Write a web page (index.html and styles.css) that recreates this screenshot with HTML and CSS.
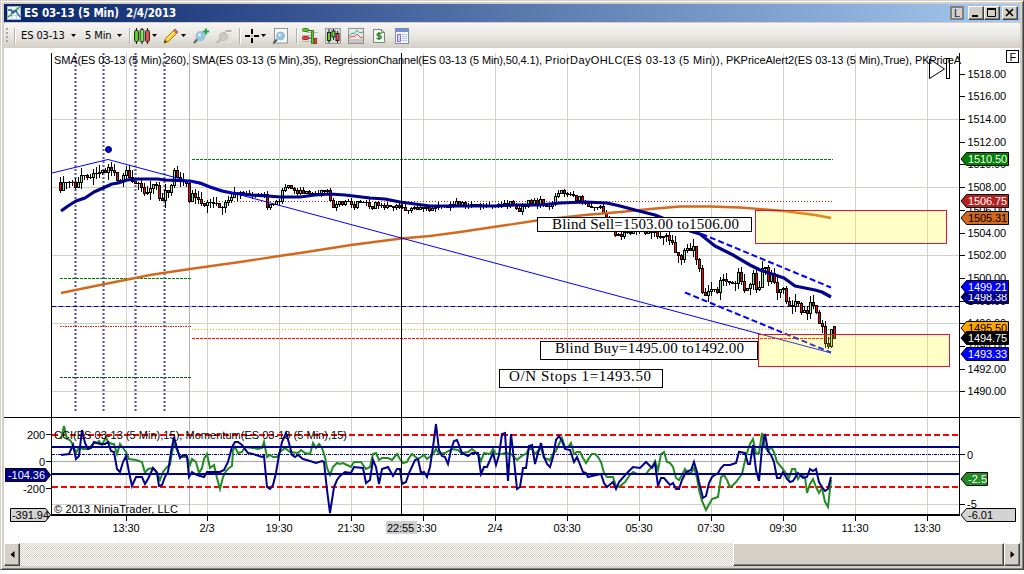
FILE: index.html
```html
<!DOCTYPE html>
<html lang="en">
<head>
    <meta charset="UTF-8">
    <meta name="viewport" content="width=device-width, initial-scale=1.0">
    <title>ES 03-13 (5 Min)  2/4/2013</title>
    <link rel="stylesheet" href="styles.css">
</head>
<body>
<div class="window">
    <!-- Title bar -->
    <div class="titlebar">
        <svg class="app-icon" width="14" height="14" viewBox="0 0 14 14">
            <rect x=".5" y=".5" width="13" height="13" fill="#f4f8fb" stroke="#9fb4cc"/>
            <path d="M.5 4.500h13M.5 9.500h13M4.500 .5v13M9.500 .5v13" stroke="#c3cfdd" fill="none"/>
            <path d="M1 11l3-2 2-4 3-1 4-3" stroke="#2da02d" stroke-width="1.500" fill="none"/>
            <path d="M1 4l3 0 2 3 3-2 2 3 2 3" stroke="#1d4fa0" stroke-width="1.300" fill="none"/>
        </svg>
        <span class="title">ES 03-13 (5 Min)&nbsp; 2/4/2013</span>
        <span class="win-link">L</span>
        <span class="win-btn"><svg width="14" height="12"><path d="M3 9h6" stroke="#000" stroke-width="2"/></svg></span>
        <span class="win-btn"><svg width="14" height="12"><path d="M2.500 1v8.500h8V1" stroke="#000" fill="none"/><path d="M2 2h9" stroke="#000" stroke-width="2"/></svg></span>
        <span class="win-btn win-close"><svg width="14" height="12"><path d="M3 2l7 7M10 2l-7 7" stroke="#000" stroke-width="1.600"/></svg></span>
    </div>

    <!-- Toolbar -->
    <div class="toolbar">
        <span class="grip"></span>
        <span class="sep"></span>
        <span class="combo instrument">ES 03-13</span><i class="arrow"></i>
        <span class="combo interval">5 Min</span><i class="arrow"></i>
        <span class="sep sep-tools"></span>
        <svg class="ico-style" width="16" height="16" viewBox="0 0 16 16">
            <path d="M2.500 0v16M8 0v16M13.500 0v16" stroke="#222" stroke-width="1.200"/>
            <rect x=".6" y="2.500" width="3.800" height="11" rx="1" fill="#5fd62c" stroke="#222"/>
            <rect x="6.100" y="1.500" width="3.800" height="12" rx="1" fill="#7be84e" stroke="#222"/>
            <rect x="11.600" y="2.500" width="3.800" height="11" rx="1" fill="#f2504b" stroke="#222"/>
        </svg><i class="arrow"></i>
        <svg class="ico-draw" width="16" height="16" viewBox="0 0 16 16">
            <path d="M1 15l1.500-4.500L11.500 1.500 14.500 4.500 5.500 13.500z" fill="#f7cf35" stroke="#a67c12"/>
            <path d="M3.500 11.500L12.500 2.500" stroke="#fff3a0"/>
            <path d="M10.500 2.500L12 1l3 3-1.500 1.500z" fill="#e46a62" stroke="#9b4b40" stroke-width=".7"/>
            <path d="M1 15l1-3 2 2z" fill="#333"/>
        </svg><i class="arrow"></i>
        <svg class="ico-in" width="17" height="16" viewBox="0 0 17 16">
            <path d="M1 15l4-4.500" stroke="#666" stroke-width="2.200"/>
            <circle cx="7.500" cy="8" r="4.500" fill="#8cc6ee" stroke="#a8b8c4"/>
            <circle cx="6.500" cy="7" r="1.800" fill="#d8effc"/>
            <path d="M13 .5v6M10 3.500h6" stroke="#18a838" stroke-width="2"/>
        </svg>
        <svg class="ico-out" width="17" height="16" viewBox="0 0 17 16">
            <path d="M1 15l4-4.500" stroke="#bbb" stroke-width="2.200"/>
            <circle cx="7.500" cy="8.500" r="4.200" fill="#c9c9c7" stroke="#c0c0bd"/>
            <path d="M9.500 3h6" stroke="#b3b3b0" stroke-width="2"/>
        </svg>
        <span class="sep sep-cross"></span>
        <svg class="ico-cross" width="14" height="14" viewBox="0 0 14 14">
            <path d="M0 7h5M9 7h5M7 0v5M7 9v5" stroke="#000" stroke-width="2"/>
            <path d="M6.500 7h1" stroke="#000"/>
        </svg><i class="arrow"></i>
        <svg class="ico-page" width="15" height="16" viewBox="0 0 15 16">
            <rect x="1.500" y=".5" width="13" height="14.500" fill="#f8f8f8" stroke="#8e9299"/>
            <path d="M0 15.500l4-4" stroke="#555" stroke-width="2"/>
            <circle cx="7.500" cy="8" r="4" fill="#8cc4ec" stroke="#a5b6c6"/>
            <circle cx="6.500" cy="7" r="1.500" fill="#dcf0fc"/>
        </svg>
        <span class="sep sep-page"></span>
        <svg class="ico-dom" width="16" height="16" viewBox="0 0 16 16">
            <path d="M5 4.500h11M0 7.500h9M7 10.500h9M0 13.500h9" stroke="#b5b5b5"/>
            <rect x=".5" y=".5" width="6" height="3" rx="1" fill="#5cc828" stroke="#3c8e1e"/>
            <rect x=".5" y="8.500" width="6" height="3" rx="1" fill="#e83c34" stroke="#b02c26"/>
            <path d="M6 2.500h4M6 10h3" stroke="#444"/>
            <rect x="9.500" y="2.500" width="2" height="13" fill="#66cc33" stroke="#388020"/>
            <rect x="12.500" y="10.500" width="2" height="5" fill="#e8504a" stroke="#a02c26"/>
        </svg>
        <svg class="ico-bars" width="16" height="16" viewBox="0 0 16 16">
            <rect x=".5" y=".5" width="15" height="15" fill="#d9d9d9" stroke="#9a9a9a"/>
            <path d="M4 1v14M8.500 1v11M12.500 3v12" stroke="#222"/>
            <rect x="2.500" y="4.500" width="3" height="8" fill="#5cd42a" stroke="#222"/>
            <rect x="7" y="3" width="3" height="6" fill="#6ede40" stroke="#222"/>
            <rect x="11" y="5.500" width="3" height="7" fill="#ea4a44" stroke="#222"/>
        </svg>
        <svg class="ico-ind" width="16" height="16" viewBox="0 0 16 16">
            <rect x=".5" y=".5" width="15" height="15" fill="#e9e9e9" stroke="#8e8e8e"/>
            <rect x="1" y="11" width="14" height="4" fill="#c4c4c4"/>
            <path d="M1 8l3-3 2 1 3-4 3 3 3-1" stroke="#36a886" fill="none"/>
            <path d="M1 10l3-2 2 1 3-3 3 3 3 1" stroke="#dd4a44" fill="none"/>
        </svg>
        <svg class="ico-pnl" width="12" height="14" viewBox="0 0 12 14">
            <path d="M.5 .5h8l3 3v10h-11z" fill="#f6f8f4" stroke="#7d8479"/>
            <path d="M8.500 .5v3h3" fill="none" stroke="#7d8479"/>
            <path d="M8.500 4.500h-3.500l-1 1 1 1.300h2.500l1 1.200-1 1.500H3.500M6 3v8" stroke="#23852a" stroke-width="1.300" fill="none"/>
        </svg>
        <svg class="ico-prop" width="14" height="16" viewBox="0 0 14 16">
            <rect x=".5" y=".5" width="13" height="15" fill="#f4f8ff" stroke="#7d8ca6"/>
            <rect x="1" y="1" width="12" height="3" fill="#6d90d6"/>
            <rect x="2.500" y="6.500" width="3" height="7" fill="#d9cbfa" stroke="#8d6ae0"/>
            <path d="M7 6.500h5M7 8.500h5M7 10.500h5M7 12.500h5" stroke="#b9c6da"/>
        </svg>
    </div>

    <!-- Price and indicator panels -->
    <svg id="chart" class="chart" width="1016" height="495" viewBox="4 48 1016 495">
        <g id="grid" class="grid"></g>
        <path class="session" d="M189.500 53V514"/>
        <path class="gray-line" d="M52 461.500H959"/>
        <g id="session-marks" class="session-marks"></g>

        <!-- horizontal levels -->
        <path class="level" stroke="#008000" stroke-dasharray="3 1" d="M192 159.500H833M60 278.500H191"/>
        <path class="level" stroke="#0a5a0a" stroke-dasharray="3 1" d="M60 377.500H191"/>
        <path class="level" stroke="#b22222" stroke-dasharray="1 2" d="M192 201.500H833"/>
        <path class="level" stroke="#c03010" stroke-dasharray="2 1 1 1" d="M60 326.500H191"/>
        <path class="level" stroke="#ffa500" stroke-dasharray="1 2" d="M192 329.500H833"/>
        <path class="level" stroke="#ff0000" stroke-dasharray="3 1" d="M192 338.500H833"/>
        <path class="level" stroke="#8c8cc8" d="M52 306.500H959"/>
        <path class="level" stroke="#00008b" stroke-dasharray="4 3" d="M52 306.500H959"/>

        <g id="candles" class="candles"></g>

        <polyline class="sma-slow" points="61,293 100,285 125,280 150,275 190,269 240,262 279,256 300,253 351,245 401,238.500 430,236 460,232 500,226 540,220 585,215 620,212 650,209 680,206.500 710,206.500 740,207.500 784,211 815,215 831,218"/>
        <polyline class="sma-fast" points="61,211 68,206 76,201 85,198 94,192 103,188 112,184 118,183 127,180 138,179 158,179 165,180 190,181 200,183 210,187 222,191 232,193 250,195 268,196 280,197 300,197 315,195 330,194 345,195 370,198 385,199 400,202 415,204 430,206 470,206 495,206 515,205 540,205 560,203 585,202 607,203 620,206 635,210 655,215 665,219 680,225 690,231 700,234 715,246 733,255 750,265 760,270 784,278 795,286 805,288 815,290 822,292 831,297"/>
        <path class="zigzag" d="M52 173L108 159.500L831 353"/>
        <path class="channel" d="M685 227L831 287.500M685 292.500L831 352.500"/>
        <circle cx="108.500" cy="149.500" r="3" fill="#00f" stroke="#000"/>

        <!-- drawn zones -->
        <g class="zone">
            <rect x="755.500" y="210.500" width="191" height="33"/>
            <rect x="758.500" y="334.500" width="191" height="32"/>
        </g>
        <g class="note">
            <rect x="537.500" y="217.500" width="214" height="14"/>
            <rect x="540.500" y="341.500" width="217" height="18"/>
            <rect x="499.500" y="369.500" width="163" height="18"/>
            <text x="552" y="229" textLength="187">Blind Sell=1503.00 to1506.00</text>
            <text x="555" y="353" textLength="189">Blind Buy=1495.00 to1492.00</text>
            <text x="509" y="381" textLength="142">O/N Stops 1=1493.50</text>
        </g>

        <!-- indicator panel -->
        <path stroke="#000" d="M4 417.500H1020"/>
        <path class="limit" d="M52 435H959M52 487H959"/>
        <path class="mid" d="M52 454.500H959"/>
        <polyline class="momentum" points="61,439 64,426 67,439 70,440 73,445 76,453 79,447 83,449 88,449 94,443 97,443 99,441 102,445 106,437 108,442 112,444 114,444 117,454 120,444 123,448 126,452 129,459 136,460 142,462 145,473 148,469 153,468 157,472 160,480 163,472 167,467 170,465 171,458 174,443 177,450 180,457 187,457 190,465 192,459 196,462 199,473 202,468 204,459 207,454 210,468 214,465 217,478 220,489 223,477 226,471 229,468 232,466 233,450 235,447 238,453 242,452 245,447 253,448 258,449 262,448 264,442 267,457 270,455 273,457 277,457 280,452 285,448 290,452 298,453 301,450 305,453 310,454 313,443 316,448 319,444 322,448 325,457 327,468 330,475 333,467 337,463 340,464 343,463 345,464 351,467 354,462 361,462 366,469 370,467 373,454 376,453 379,460 382,458 388,458 392,460 397,454 400,459 403,463 407,462 409,458 412,454 418,459 424,455 427,459 433,454 436,449 439,454 445,453 452,449 458,450 461,453 468,452 472,449 478,454 481,461 484,453 490,454 493,449 496,454 502,454 505,453 511,454 517,460 523,455 526,454 529,449 532,449 535,454 541,448 544,458 547,459 550,460 553,454 556,451 559,444 562,438 565,447 568,447 571,443 574,454 577,452 580,452 583,458 586,463 589,458 592,454 595,454 598,457 601,462 604,473 607,477 613,477 616,486 619,487 625,482 630,475 633,472 637,474 646,474 649,470 652,467 655,461 658,470 661,454 664,452 667,462 670,463 673,467 676,478 679,480 682,475 685,469 688,473 691,473 694,468 697,478 699,490 702,501 706,510 712,499 715,498 718,497 721,477 724,475 727,480 730,487 733,485 736,482 739,478 742,474 744,465 747,453 750,444 753,439 756,454 759,453 762,433 765,447 768,451 771,447 774,452 777,462 783,469 789,478 792,469 795,469 798,479 801,475 805,477 807,493 810,484 813,479 816,487 819,493 822,488 825,502 828,507 831,480"/>
        <path class="band" d="M52 447H959M52 474H959"/>
        <polyline class="cci" points="61,455 69,454 73,445 76,459 79,456 82,430 85,443 88,449 91,448 94,442 100,444 105,444 108,442 111,451 114,452 117,469 120,472 123,462 126,456 129,472 132,486 136,477 142,477 145,484 148,479 153,468 157,473 159,486 162,485 165,477 168,472 171,452 174,437 177,448 180,458 183,455 187,456 189,477 192,472 197,475 204,477 207,472 220,472 224,470 228,462 232,447 235,442 238,442 242,445 248,453 253,454 262,457 264,456 267,487 270,489 273,485 276,473 279,455 282,442 286,433 289,443 292,455 295,457 298,455 303,459 310,461 316,463 322,461 324,462 327,490 330,513 334,487 337,480 340,476 345,472 351,473 354,467 363,468 366,483 370,480 373,460 376,467 379,484 382,469 388,467 393,476 397,469 400,469 402,484 406,482 409,473 415,460 418,459 421,473 424,472 427,477 430,467 433,447 436,424 439,450 442,456 445,457 448,464 451,450 454,441 457,440 462,453 468,456 472,453 478,453 481,474 484,467 487,467 493,453 496,465 499,455 502,434 505,433 508,481 511,434 514,460 517,489 520,487 523,468 526,468 529,446 532,445 535,464 538,453 541,443 544,457 547,464 550,467 553,457 556,440 559,436 562,441 565,449 570,450 574,462 577,457 583,472 586,473 588,477 592,476 601,474 604,483 607,487 613,482 616,489 619,482 627,473 633,467 640,468 646,462 652,468 655,463 658,486 661,478 664,478 670,485 673,483 676,489 679,489 682,480 686,472 691,470 694,462 697,472 699,482 703,498 706,496 709,483 712,477 718,473 721,468 724,465 730,465 736,463 739,452 745,453 748,464 750,464 753,445 756,470 759,481 762,448 765,434 768,451 771,455 774,462 777,478 780,478 783,472 787,479 790,482 793,481 798,473 803,478 807,477 810,469 813,471 816,469 819,482 822,487 825,491 828,489 831,477"/>

        <!-- axes -->
        <path stroke="#000" d="M51.500 53V515M959.500 53V515M401.500 53V514"/>
        <path stroke="#000" stroke-width="2" d="M51 515H960"/>
        <path id="ticks" stroke="#000" d="M46 434.500H51M46 461.500H51M46 488.500H51M960 454.500H965M960 504.500H965"/>

        <g class="labels">
            <text x="54" y="64" textLength="135">SMA(ES 03-13 (5 Min),260),</text>
            <text x="192" y="64" textLength="129">SMA(ES 03-13 (5 Min),35),</text>
            <text x="324" y="64" textLength="218">RegressionChannel(ES 03-13 (5 Min),50,4.1),</text>
            <text x="545" y="64" textLength="178">PriorDayOHLC(ES 03-13 (5 Min)),</text>
            <text x="726" y="64" textLength="186">PKPriceAlert2(ES 03-13 (5 Min),True),</text>
            <text x="915" y="64" textLength="46">PKPriceA</text>
            <text x="54" y="439" textLength="293">CCI(ES 03-13 (5 Min),15), Momentum(ES 03-13 (5 Min),15)</text>
            <text x="54" y="513" textLength="124">© 2013 NinjaTrader, LLC</text>
            <text x="27" y="439" textLength="18">200</text>
            <text x="39" y="466">0</text>
            <text x="23" y="493" textLength="22">-200</text>
            <text x="967" y="459">0</text>
            <text x="967" y="508">-5</text>
        </g>
        <rect x="960" y="50" width="46" height="12" fill="#fff"/>
        <path d="M929.500 59V78.500L944.500 69Z" fill="none" stroke="#000"/>
        <rect x="946.500" y="58.500" width="3" height="20" fill="none" stroke="#000"/>
        <rect x="1006.500" y="50.500" width="12" height="12" fill="#fff" stroke="#000"/>
        <text x="1009.500" y="60.500" class="labels">F</text>
        <g id="axis-text" class="labels"></g>
        <rect x="386" y="521" width="31" height="13" fill="#d0d0d0"/>
        <text x="387" y="532" class="labels" textLength="27">22:55</text>
        <g id="tags"></g>
    </svg>

    <!-- Horizontal scrollbar -->
    <div class="scrollbar">
        <span class="scroll-btn"><svg width="5" height="8"><path d="M4.500 0v7L.5 3.500z"/></svg></span>
        <span class="track"></span>
        <span class="thumb"></span>
        <span class="scroll-btn"><svg width="5" height="8"><path d="M.5 0v7l4-3.500z"/></svg></span>
    </div>
</div>
<script src="chart.js"></script>
</body>
</html>
```
FILE: styles.css
```css
* {
    box-sizing: border-box;
}

body {
    margin: 0;
    background: #fff;
    font-family: "DejaVu Sans Condensed", "DejaVu Sans", sans-serif;
    font-size: 11px;
    overflow: hidden;
}

.window {
    width: 1024px;
    height: 570px;
    padding: 2px 2px 2px 2px;
    background: #d4d0c8;
    border: 1px solid #d4d0c8;
    border-right-color: #404040;
    border-bottom-color: #404040;
    box-shadow: inset 1px 1px 0 #fff, inset -1px -1px 0 #808080;
    display: flex;
    flex-direction: column;
}

/* Title bar */
.titlebar {
    display: flex;
    align-items: center;
    height: 18px;
    margin: 1px 1px 0 1px;
    padding: 0 2px 0 3px;
    background: linear-gradient(to right, #0a246a, #a6caf0);
    flex-shrink: 0;
}

.title {
    flex: 1;
    margin-left: 3px;
    color: #fff;
    font-family: "DejaVu Sans", sans-serif;
    font-stretch: condensed;
    font-weight: bold;
    font-size: 11.5px;
    letter-spacing: -0.08px;
    white-space: nowrap;
}

.win-link {
    width: 14px;
    height: 14px;
    margin-right: 4px;
    border: 2px solid #808080;
    background: #d4d0c8;
    color: #0a246a;
    font: 11px/11px "Liberation Sans", sans-serif;
    text-align: center;
}

.win-btn {
    width: 16px;
    height: 14px;
    background: #d4d0c8;
    border: 1px solid;
    border-color: #fff #404040 #404040 #fff;
    box-shadow: inset -1px -1px 0 #808080;
}

.win-btn svg {
    display: block;
}

.win-close {
    margin-left: 2px;
}

/* Toolbar */
.toolbar {
    display: flex;
    align-items: center;
    height: 25px;
    margin: 1px 1px 0 1px;
    background: linear-gradient(#f6f5f3, #eae8e4 50%, #d3cfc6);
    border-radius: 2px 2px 6px 2px;
    flex-shrink: 0;
}

.toolbar > * {
    flex-shrink: 0;
}

.grip {
    width: 2px;
    height: 15px;
    margin-left: 2px;
    background: repeating-linear-gradient(#a8a59d 0 2px, transparent 2px 4px);
}

.sep {
    width: 2px;
    height: 16px;
    margin-left: 6px;
    background: #b4b1a9;
    border-right: 1px solid #fff;
}

.combo {
    margin-left: 5px;
    white-space: nowrap;
    letter-spacing: -0.1px;
}

.instrument {
    width: 45px;
}

.interval {
    width: 26px;
    margin-left: 9px;
}

.arrow {
    width: 5px;
    height: 3px;
    margin-left: 5px;
    background: #000;
    clip-path: polygon(0 0, 100% 0, 50% 100%);
}

.interval + .arrow {
    margin-left: 6px;
}

.sep-tools {
    margin-left: 7px;
}

.ico-style {
    margin-left: 3px;
}

.ico-style + .arrow {
    margin-left: 2px;
}

.ico-draw {
    margin-left: 6px;
}

.ico-draw + .arrow {
    margin-left: 2px;
}

.ico-in {
    margin-left: 7px;
}

.ico-out {
    margin-left: 6px;
}

.sep-cross {
    margin-left: 6px;
}

.ico-cross {
    margin-left: 4px;
}

.ico-cross + .arrow {
    margin-left: 2px;
}

.ico-page {
    margin-left: 7px;
}

.sep-page {
    margin-left: 8px;
}

.ico-dom {
    margin-left: 4px;
}

.ico-bars {
    margin-left: 7px;
}

.ico-ind {
    margin-left: 7px;
}

.ico-pnl {
    margin-left: 9px;
}

.ico-prop {
    margin-left: 10px;
}

/* Chart */
.chart {
    display: block;
    margin: 0 1px;
    background: #fff;
    flex-shrink: 0;
}

.grid {
    stroke: #d3d0c8;
}

.session {
    stroke: #b4b4b4;
}

.gray-line {
    stroke: #a9a9a9;
}

.session-marks {
    stroke: #483d8b;
    stroke-opacity: 0.85;
    stroke-width: 2.2;
    stroke-dasharray: 2 2;
}

.level {
    fill: none;
}

.candles {
    stroke: #000;
    shape-rendering: crispEdges;
}

.sma-slow {
    fill: none;
    stroke: #d2691e;
    stroke-width: 2.3;
}

.sma-fast {
    fill: none;
    stroke: #00008b;
    stroke-width: 3.2;
    stroke-linejoin: round;
}

.zigzag {
    fill: none;
    stroke: #0000ff;
    stroke-width: 1;
}

.channel {
    stroke: #0000ff;
    stroke-width: 2;
    stroke-dasharray: 6 3;
}

.zone {
    fill: rgba(255, 255, 0, 0.22);
    stroke: #dc143c;
}

.note rect {
    fill: #fff;
    stroke: #000;
}

.note text {
    font-family: "Liberation Serif", serif;
    font-size: 15px;
}

.limit {
    stroke: #ff0000;
    stroke-width: 2;
    stroke-dasharray: 6 3;
}

.mid {
    stroke: #00008b;
    stroke-dasharray: 3 1 1 1;
}

.band {
    stroke: #00008b;
    stroke-width: 2;
}

.momentum,
.cci {
    fill: none;
    stroke: #228b22;
    stroke-width: 2;
}

.cci {
    stroke: #00008b;
}

.labels,
.tag-text {
    font-family: "Liberation Sans", Arial, sans-serif;
    font-size: 11px;
}

/* Scrollbar */
.scrollbar {
    display: flex;
    height: 23px;
    margin: 0 1px;
    flex-shrink: 0;
}

.scroll-btn,
.thumb {
    display: flex;
    align-items: center;
    justify-content: center;
    width: 16px;
    background: #d4d0c8;
    border: 1px solid;
    border-color: #fff #404040 #404040 #fff;
    box-shadow: inset -1px -1px 0 #808080;
}

.track {
    flex: 1;
    background: repeating-conic-gradient(#d4d0c8 0 25%, #fff 0 50%) 0 0 / 2px 2px;
}

.thumb {
    width: 271px;
}
```
FILE: chart.js
```javascript
const NS = 'http://www.w3.org/2000/svg';

function add(parent, name, attrs, text) {
    const el = document.createElementNS(NS, name);
    for (const key in attrs) el.setAttribute(key, attrs[key]);
    if (text !== undefined) el.textContent = text;
    document.getElementById(parent).appendChild(el);
    return el;
}

// Grid and time axis
const times = ['13:30', '2/3', '19:30', '21:30', '23:30', '2/4', '03:30', '05:30', '07:30', '09:30', '11:30', '13:30'];
const timeX = [126.5, 207.5, 279.5, 351.5, 423.5, 495.5, 567.5, 639.5, 711.5, 783.5, 855.5, 927.5];
let ticks = document.getElementById('ticks').getAttribute('d');

timeX.forEach((x, i) => {
    add('grid', 'path', { d: `M${x} 53V514` });
    ticks += `M${x} 516V521`;
    const w = times[i].length > 3 ? 27 : 15;
    add('axis-text', 'text', { x: x - w / 2 - 0.5, y: 532, textLength: w }, times[i]);
});
[119.5, 187.5, 255.5, 323.5, 391.5, 504.5].forEach(y => add('grid', 'path', { d: `M52 ${y}H959` }));
[75.5, 103.5, 135.5, 164.5].forEach(x => add('session-marks', 'path', { d: `M${x} 53V413` }));

// Price axis
for (let p = 1518; p >= 1490; p -= 2) {
    const y = Math.round(119 + (1514 - p) * 11.35) + 0.5;
    ticks += `M960 ${y}H965`;
    add('axis-text', 'text', { x: 967.5, y: y + 3.5, textLength: 38.5 }, p.toFixed(2));
}
document.getElementById('ticks').setAttribute('d', ticks);

// Close of each 5 minute bar, as chart y
const closes = [
    190, 182, 182, 182, 182, 187, 182, 175, 175, 177, 177, 173, 173, 172, 170, 172, 167, 170, 172, 180,
    180, 175, 170, 177, 181, 183, 183, 187, 193, 192, 188, 184, 185, 198, 200, 190, 192, 185, 170, 177,
    180, 180, 183, 201, 193, 197, 199, 203, 205, 202, 202, 203, 203, 207, 207, 202, 200, 197, 194, 193,
    192, 193, 193, 195, 195, 194, 195, 194, 194, 207, 204, 204, 201, 201, 190, 187, 185, 188, 190, 193,
    190, 193, 191, 193, 193, 193, 193, 190, 191, 190, 200, 207, 204, 201, 204, 201, 201, 204, 207, 201,
    202, 202, 202, 206, 208, 202, 205, 205, 207, 205, 206, 207, 205, 207, 207, 210, 210, 208, 207, 209,
    207, 208, 207, 210, 208, 207, 205, 206, 206, 207, 204, 205, 201, 205, 202, 205, 206, 204, 205, 204,
    206, 205, 206, 205, 205, 205, 204, 206, 203, 205, 201, 204, 208, 211, 206, 206, 200, 204, 200, 205,
    199, 205, 206, 206, 203, 196, 193, 190, 193, 194, 194, 195, 200, 196, 202, 203, 206, 207, 207, 207,
    206, 213, 219, 224, 228, 235, 234, 236, 232, 232, 233, 229, 231, 228, 230, 233, 230, 232, 230, 236,
    237, 236, 235, 240, 242, 252, 255, 259, 250, 248, 250, 246, 259, 268, 292, 295, 291, 289, 289, 292,
    280, 279, 281, 282, 283, 283, 272, 281, 290, 288, 284, 273, 289, 287, 268, 267, 281, 273, 282, 292,
    289, 288, 301, 305, 306, 301, 303, 312, 310, 313, 302, 305, 312, 323, 326, 343, 346, 329, 338
];

closes.forEach((c, i) => {
    const x = 60.5 + i * 3;
    const open = i === 257 ? 346 : i === 258 ? 326 : i ? closes[i - 1] : 182;
    const top = Math.round(Math.min(open, c)) + 0.5;
    const bottom = Math.round(Math.max(open, c)) + 0.5;
    const reach = i > 60 && i < 195 ? 4 : 8;
    const up = ((i * 37 + 11) % 17) / 17 * reach;
    const down = ((i * 53 + 5) % 19) / 19 * reach;
    if (i < 258) add('candles', 'path', { d: `M${x} ${top - up}V${bottom + down}` });
    add('candles', 'rect', {
        x: x - 1, y: top, width: 2, height: Math.max(bottom - top, 0.01),
        fill: c >= open ? '#ff0000' : '#90ee90'
    });
    // colour core between the two body edges
    if (bottom - top > 2) {
        add('candles', 'rect', {
            x: x - 0.5, y: top + 0.5, width: 1, height: bottom - top - 1,
            fill: c >= open ? '#ff0000' : '#90ee90', stroke: 'none'
        });
    }
});

// Price markers: y, text, background, text colour
const tags = [
    [159, '1510.50', '#008000', '#fff'],
    [201, '1506.75', '#b22222', '#fff'],
    [218, '1505.31', '#d2691e', '#000'],
    [297, '1498.38', '#00008b', '#fff'],
    [287, '1499.21', '#0000ff', '#fff'],
    [328.5, '1495.50', '#ffa500', '#000'],
    [338, '1494.75', '#000', '#fff'],
    [354, '1493.33', '#0000ff', '#fff'],
    [479, '-2.5', '#228b22', '#fff', 987.5],
    [515, '-6.01', '#d3d3d3', '#000', 1015.5]
];
tags.forEach(([y, text, bg, fg, right = 1008.5]) => {
    const t = Math.floor(y) - 6.5;
    add('tags', 'path', { d: `M961 ${t + 6.5}L966.500 ${t}H${right}V${t + 13}H966.500Z`, fill: bg, stroke: '#000' });
    const w = text.length > 5 ? 39 : text.length > 4 ? 25 : 19;
    add('tags', 'text', { x: 968, y: t + 10.5, fill: fg, class: 'tag-text', textLength: w }, text);
});

// Left side markers
[[475, 5.5, 8, '-104.36', '#00008b', '#fff'], [515, 10.5, 12, '-391.94', '#d3d3d3', '#000']].forEach(([y, left, tx, text, bg, fg]) => {
    add('tags', 'path', { d: `M50.500 ${y}L45.500 ${y - 6.5}H${left}V${y + 6.5}H45.500Z`, fill: bg, stroke: '#000' });
    add('tags', 'text', { x: tx, y: y + 4, fill: fg, class: 'tag-text', textLength: 37 }, text);
});
```
